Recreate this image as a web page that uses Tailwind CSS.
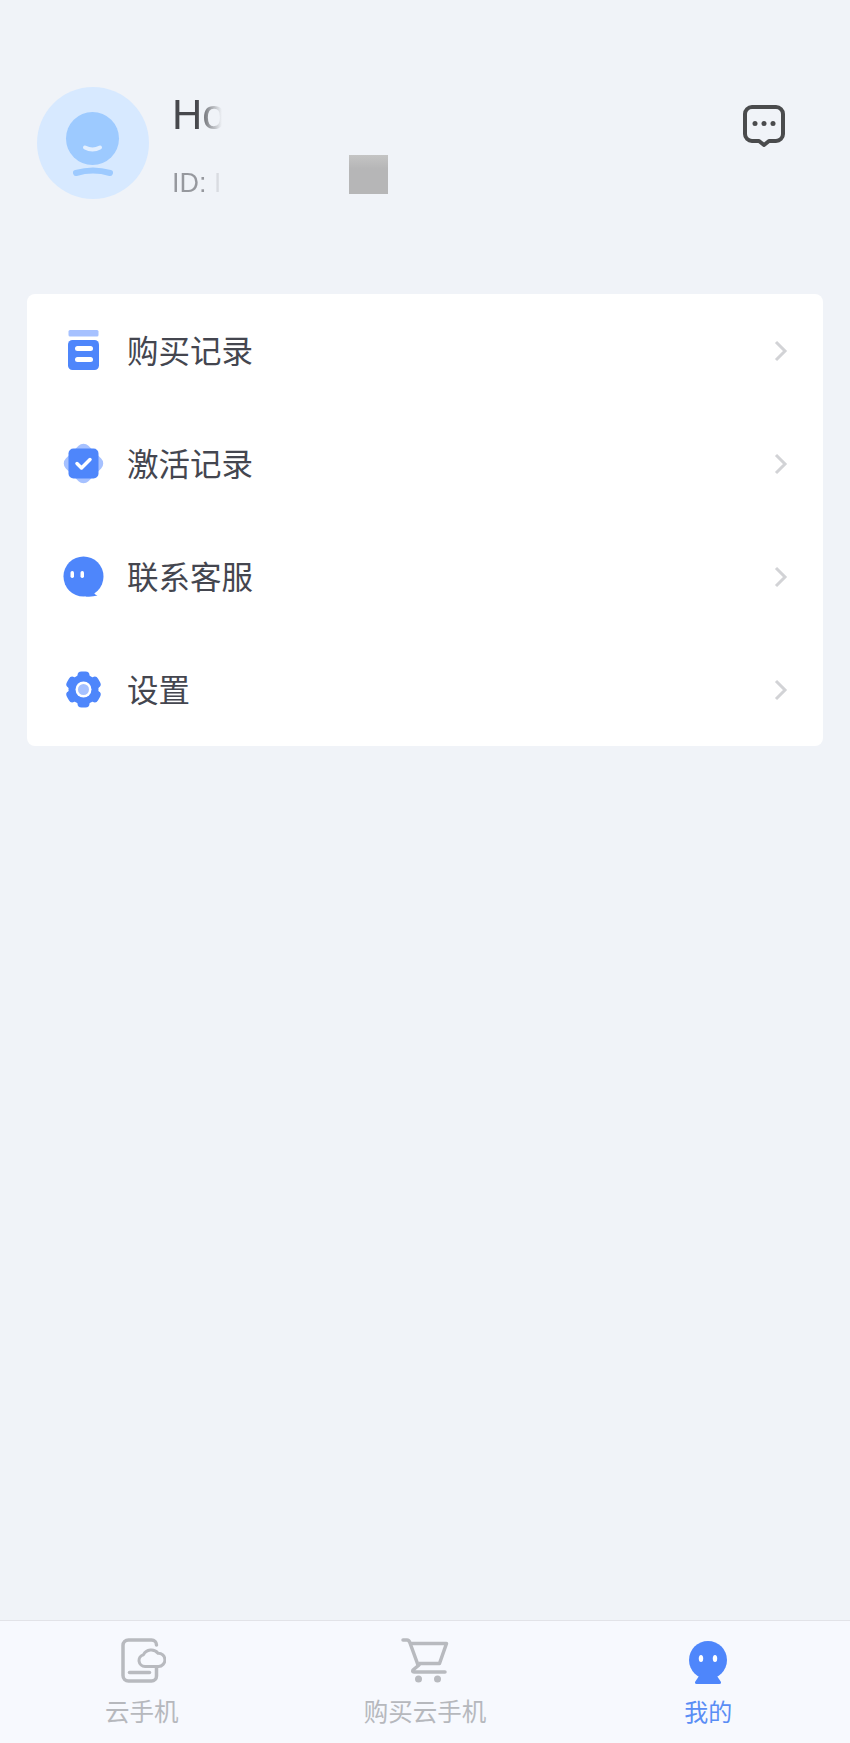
<!DOCTYPE html>
<html lang="zh-CN">
<head>
  <meta charset="UTF-8">
  <title>我的</title>
  <script src="https://cdn.jsdelivr.net/npm/@tailwindcss/browser@4"></script>
</head>
<body class="bg-[#f0f3f8] h-[1743px] w-[850px] overflow-hidden flex flex-col font-['Noto_Sans_CJK_SC','Liberation_Sans',sans-serif]">
  <!-- header -->
  <header class="relative h-[294px] shrink-0 pt-[87px] pl-[37px] flex">
    <div class="w-[112px] h-[112px] rounded-full bg-[#d7e9ff] shrink-0">
      <svg viewBox="0 0 112 112" class="w-[112px] h-[112px]">
        <circle cx="55.5" cy="51.5" r="26.5" fill="#9dcaff"/>
        <path d="M48 60.5q7.500 4 15 0" fill="none" stroke="#e3efff" stroke-width="4" stroke-linecap="round"/>
        <path d="M39 86q17-5 34 0" fill="none" stroke="#9dcaff" stroke-width="6" stroke-linecap="round"/>
      </svg>
    </div>
    <div class="ml-[23px] w-[50px] font-['Liberation_Sans',sans-serif]">
      <div class="mt-[3px] h-[50px] text-[42px] leading-[50px] font-light bg-[linear-gradient(90deg,#47484d_0%,#47484d_50%,#f0f3f8_100%)] bg-clip-text text-transparent">Ho</div>
      <div class="mt-[27px] h-[32px] text-[27px] leading-[32px] whitespace-nowrap bg-[linear-gradient(90deg,#96989e_0%,#96989e_65%,#f0f3f8_100%)] bg-clip-text text-transparent">ID: I</div>
    </div>
    <div class="absolute left-[349px] top-[155px] w-[39px] h-[39px] bg-[linear-gradient(180deg,#c4c4c4_0%,#b6b6b7_35%,#b6b6b7_100%)]"></div>
    <svg viewBox="0 0 46 44" class="absolute left-[741px] top-[103px] w-[46px] h-[44px]">
      <path d="M11 4h24a7 7 0 0 1 7 7v20a7 7 0 0 1-7 7h-7l-5 4-5-4h-7a7 7 0 0 1-7-7v-20a7 7 0 0 1 7-7z" fill="none" stroke="#4a4b4d" stroke-width="4" stroke-linejoin="round"/>
      <circle cx="14" cy="20.500" r="2.500" fill="#4a4b4d"/>
      <circle cx="23" cy="20.500" r="2.500" fill="#4a4b4d"/>
      <circle cx="32" cy="20.500" r="2.500" fill="#4a4b4d"/>
    </svg>
  </header>

  <!-- menu -->
  <main class="mx-[27px] h-[452px] bg-white rounded-[8px] flex flex-col shrink-0 text-[#44464f] text-[31.500px]">
    <div class="flex-1 flex items-center pl-[36px] pr-[35px]">
      <div class="w-[41px] h-[41px] flex items-center justify-center shrink-0">
        <svg viewBox="0 0 41 41" class="w-[41px] h-[41px]">
          <rect x="5.500" y="0" width="30" height="6.500" rx="1.500" fill="#a6c1ff"/>
          <rect x="5" y="10" width="31" height="30" rx="4.500" fill="#4e86fb"/>
          <rect x="12" y="16" width="18" height="5" rx="2.500" fill="#fff"/>
          <rect x="12" y="27" width="18" height="5" rx="2.500" fill="#fff"/>
        </svg>
      </div>
      <span class="ml-[23px] mb-[2px] leading-none">购买记录</span>
      <svg viewBox="0 0 14 22" class="ml-auto w-[14px] h-[22px]"><path d="M2 2l9 9-9 9" fill="none" stroke="#d2d3d6" stroke-width="3"/></svg>
    </div>
    <div class="flex-1 flex items-center pl-[36px] pr-[35px]">
      <div class="w-[41px] h-[41px] flex items-center justify-center shrink-0">
        <svg viewBox="0 0 41 41" class="w-[41px] h-[41px]">
          <rect x="4.500" y="4.500" width="32" height="32" rx="7" fill="#a6c1ff" transform="rotate(45 20.500 20.500)"/>
          <rect x="5.500" y="5.500" width="30" height="30" rx="5" fill="#4e86fb"/>
          <path d="M14 20.500l4.500 4.500 8.500-8.500" fill="none" stroke="#fff" stroke-width="3.500" stroke-linecap="round" stroke-linejoin="round"/>
        </svg>
      </div>
      <span class="ml-[23px] mb-[2px] leading-none">激活记录</span>
      <svg viewBox="0 0 14 22" class="ml-auto w-[14px] h-[22px]"><path d="M2 2l9 9-9 9" fill="none" stroke="#d2d3d6" stroke-width="3"/></svg>
    </div>
    <div class="flex-1 flex items-center pl-[36px] pr-[35px]">
      <div class="w-[41px] h-[41px] flex items-center justify-center shrink-0">
        <svg viewBox="0 0 41 41" class="w-[41px] h-[41px]">
          <circle cx="20.500" cy="20.500" r="20" fill="#4e86fb"/>
          <path d="M28 36l3 1q1.500 2 3.500 2.500q-5 1.500-12 1z" fill="#4e86fb"/>
          <rect x="7.500" y="15" width="3.500" height="7" rx="1.700" fill="#fff"/>
          <rect x="17.500" y="15" width="3.500" height="7" rx="1.700" fill="#fff"/>
        </svg>
      </div>
      <span class="ml-[23px] mb-[2px] leading-none">联系客服</span>
      <svg viewBox="0 0 14 22" class="ml-auto w-[14px] h-[22px]"><path d="M2 2l9 9-9 9" fill="none" stroke="#d2d3d6" stroke-width="3"/></svg>
    </div>
    <div class="flex-1 flex items-center pl-[36px] pr-[35px]">
      <div class="w-[41px] h-[41px] flex items-center justify-center shrink-0">
        <svg viewBox="0 0 41 41" class="w-[41px] h-[41px]">
          <circle cx="20.500" cy="20.500" r="15" fill="#4e86fb"/>
          <rect x="14.500" y="2.500" width="12" height="36" rx="4" fill="#4e86fb"/>
          <rect x="14.500" y="2.500" width="12" height="36" rx="4" fill="#4e86fb" transform="rotate(60 20.500 20.500)"/>
          <rect x="14.500" y="2.500" width="12" height="36" rx="4" fill="#4e86fb" transform="rotate(120 20.500 20.500)"/>
          <circle cx="20.500" cy="20.500" r="8" fill="#fff"/>
          <circle cx="20.500" cy="20.500" r="5.500" fill="#a6c1ff"/>
        </svg>
      </div>
      <span class="ml-[23px] mb-[2px] leading-none">设置</span>
      <svg viewBox="0 0 14 22" class="ml-auto w-[14px] h-[22px]"><path d="M2 2l9 9-9 9" fill="none" stroke="#d2d3d6" stroke-width="3"/></svg>
    </div>
  </main>

  <!-- tab bar -->
  <nav class="mt-auto h-[123px] shrink-0 bg-[#f7f9fe] border-t border-[#e2e3e8] grid grid-cols-3 text-[24.500px] leading-none text-[#b6b8bd]">
    <div class="flex flex-col items-center pt-[16px]">
      <svg viewBox="0 0 48 48" class="w-[48px] h-[48px]">
        <path d="M38.500 8a5 5 0 0 0-5-5h-23a5.500 5.500 0 0 0-5.500 5.500v30a5.500 5.500 0 0 0 5.500 5.500h23a5 5 0 0 0 5-5v-8" fill="none" stroke="#b8babf" stroke-width="3.500" stroke-linecap="round"/>
        <path d="M11.500 35.500h20" fill="none" stroke="#b8babf" stroke-width="3.500" stroke-linecap="round"/>
        <path d="M27 29.500a6 6 0 0 1-1.500-11.800a8.500 8 0 0 1 14.500-1.500a6.600 6.600 0 0 1 .5 13.300z" fill="#f7f9fe" stroke="#b8babf" stroke-width="3" stroke-linejoin="round"/>
      </svg>
      <span class="mt-[14px]">云手机</span>
    </div>
    <div class="flex flex-col items-center pt-[16px]">
      <svg viewBox="0 0 48 48" class="w-[48px] h-[48px]">
        <path d="M2 3h4q2 0 3 3l8 22" fill="none" stroke="#b8babf" stroke-width="3.500" stroke-linejoin="round" stroke-linecap="round"/>
        <path d="M8.500 6.500h37l-7 20h-21" fill="none" stroke="#b8babf" stroke-width="3.500" stroke-linejoin="round"/>
        <path d="M18 28l-6 5q-1 2 1 2h31" fill="none" stroke="#b8babf" stroke-width="3.500" stroke-linecap="round"/>
        <circle cx="17.500" cy="42" r="3.500" fill="#b8babf"/>
        <circle cx="36.500" cy="42" r="3.500" fill="#b8babf"/>
      </svg>
      <span class="mt-[14px]">购买云手机</span>
    </div>
    <div class="flex flex-col items-center pt-[16px] text-[#5a8df5] text-[24px]">
      <svg viewBox="0 0 48 48" class="w-[48px] h-[48px]">
        <circle cx="24" cy="23" r="19" fill="#4e86fb"/>
        <path d="M17 36h14l6 9q.5 2-1.500 2h-23q-2 0-1.500-2z" fill="#4e86fb"/>
        <ellipse cx="17" cy="21.500" rx="2.200" ry="3.500" fill="#fff"/>
        <ellipse cx="31" cy="21.500" rx="2.200" ry="3.500" fill="#fff"/>
      </svg>
      <span class="mt-[14px]">我的</span>
    </div>
  </nav>
</body>
</html>
